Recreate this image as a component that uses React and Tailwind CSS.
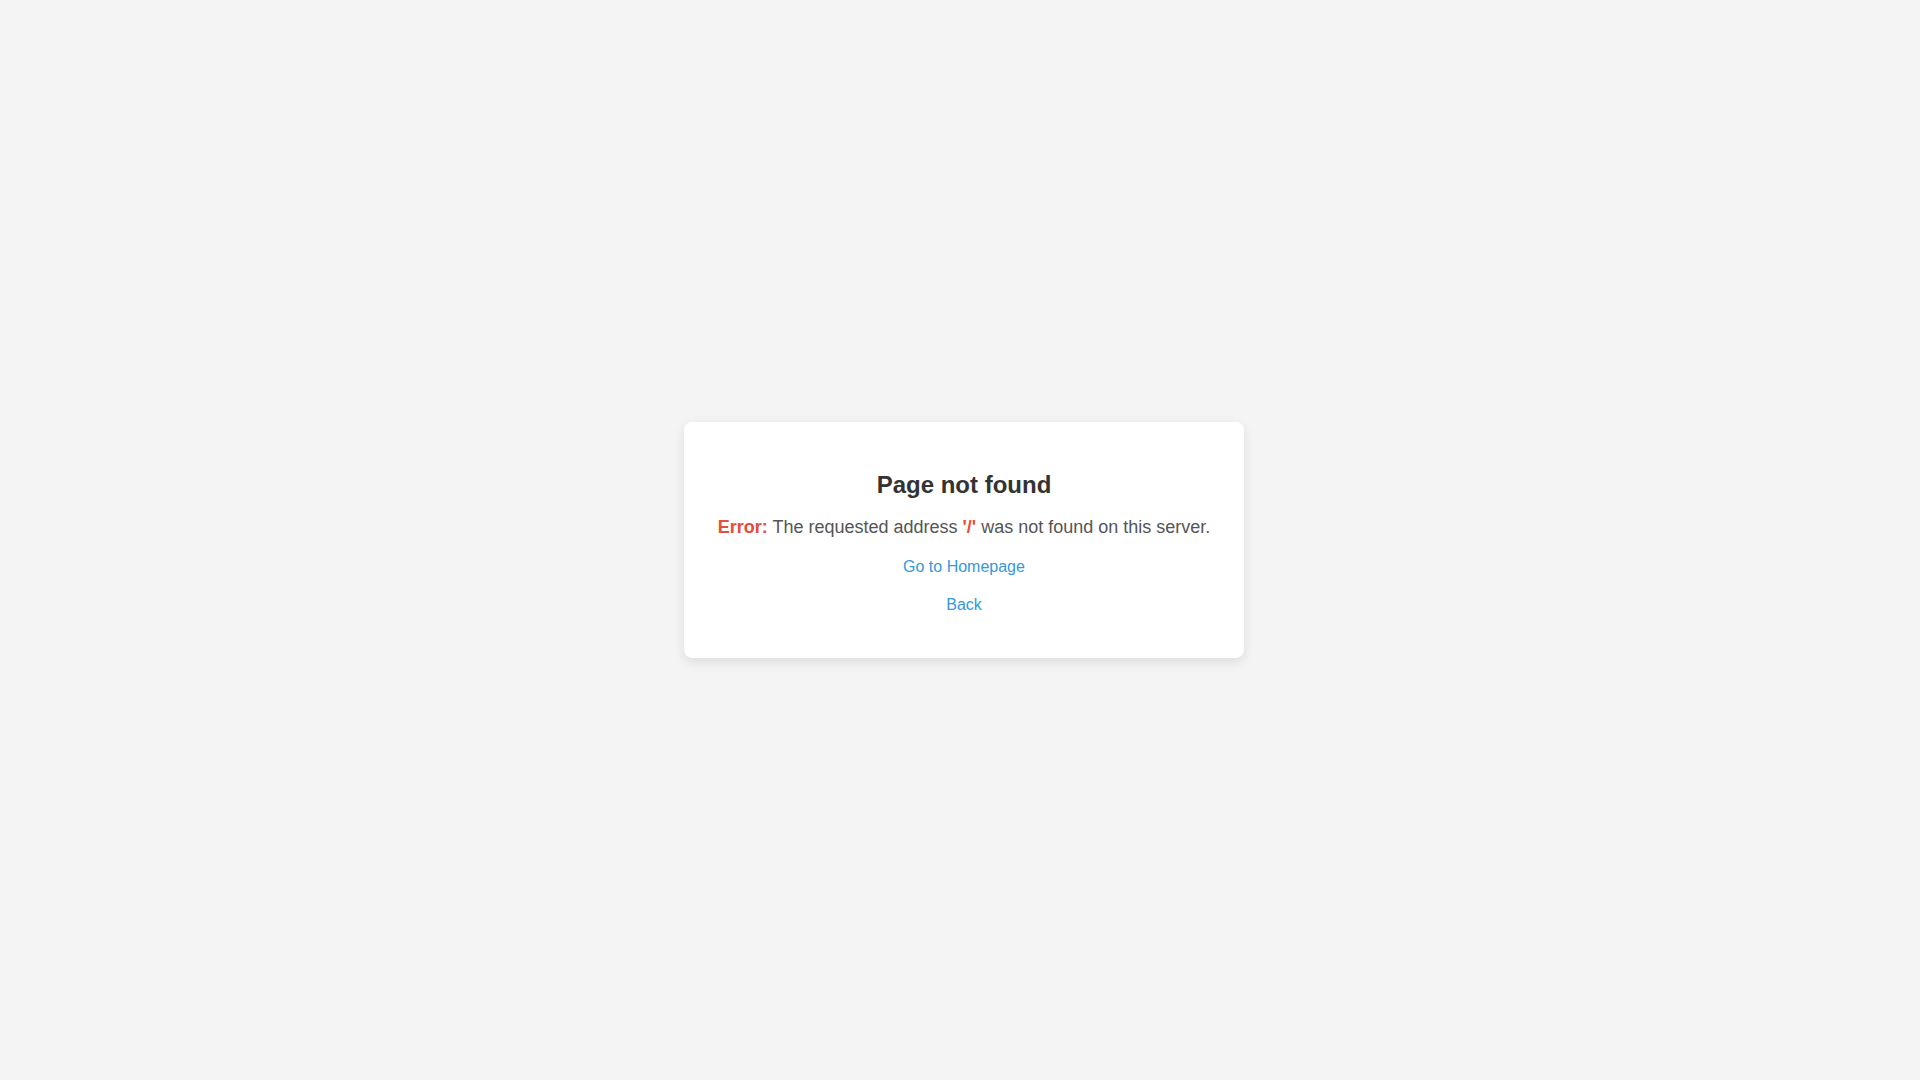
export default function App() {
  return (
    <div
      className="min-h-screen bg-[#f4f4f4] flex items-center justify-center pl-2"
      style={{ fontFamily: '"Liberation Sans", Arial, sans-serif' }}
    >
      <div className="w-[560px] h-[236px] bg-white rounded-lg shadow-[0_4px_12px_rgba(0,0,0,0.1)] pt-[49px] text-center">
        <h1 className="text-[24px] leading-[28px] font-bold text-[#333]">Page not found</h1>
        <p className="mt-4 text-[18px] leading-[24px] text-[#555]">
          <span className="font-bold text-[#e74c3c]">Error:</span> The requested address{' '}
          <span className="font-bold text-[#e74c3c]">'/'</span> was not found on this server.
        </p>
        <div className="mt-4 flex flex-col items-center gap-[14px] text-[16px] leading-[24px]">
          <a href="#" className="text-[#3498db] hover:underline">Go to Homepage</a>
          <a href="#" className="text-[#3498db] hover:underline">Back</a>
        </div>
      </div>
    </div>
  );
}
